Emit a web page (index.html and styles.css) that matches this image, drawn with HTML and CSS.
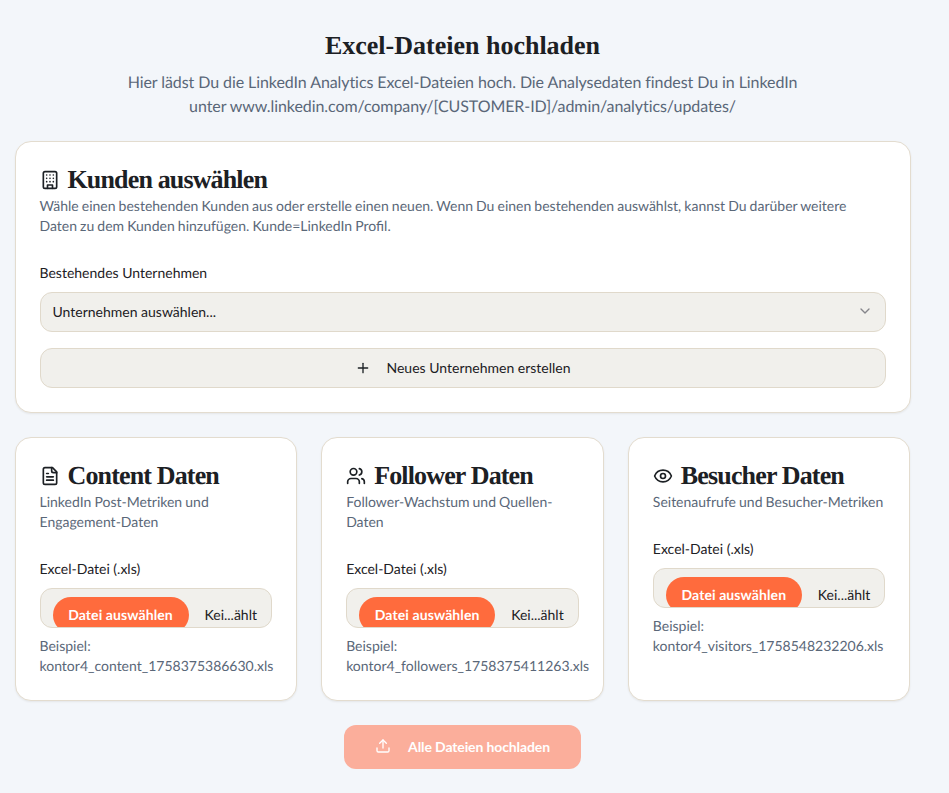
FILE: index.html
```html
<!DOCTYPE html>
<html lang="de">
<head>
    <meta charset="UTF-8">
    <meta name="viewport" content="width=device-width, initial-scale=1.0">
    <title>Excel-Dateien hochladen</title>
    <link rel="stylesheet" href="styles.css">
</head>
<body>
    <main class="page">
        <header class="intro">
            <h1>Excel-Dateien hochladen</h1>
            <p>Hier lädst Du die LinkedIn Analytics Excel-Dateien hoch. Die Analysedaten findest Du in LinkedIn unter www.linkedin.com/company/[CUSTOMER-ID]/admin/analytics/updates/</p>
        </header>

        <section class="card customer">
            <h2 class="card-title">
                <svg class="icon" viewBox="0 0 24 24"><rect x="4" y="2" width="16" height="20" rx="2"/><path d="M9 22v-4h6v4"/><path d="M8 6h.01M16 6h.01M12 6h.01M12 10h.01M12 14h.01M16 10h.01M16 14h.01M8 10h.01M8 14h.01"/></svg>
                Kunden auswählen
            </h2>
            <p class="card-text">Wähle einen bestehenden Kunden aus oder erstelle einen neuen. Wenn Du einen bestehenden auswählst, kannst Du darüber weitere Daten zu dem Kunden hinzufügen. Kunde=LinkedIn Profil.</p>
            <label class="field-label">Bestehendes Unternehmen</label>
            <button class="control select">
                <span>Unternehmen auswählen...</span>
                <svg class="chevron" viewBox="0 0 24 24"><path d="m6 9 6 6 6-6"/></svg>
            </button>
            <button class="control new-company">
                <svg class="plus" viewBox="0 0 24 24"><path d="M5 12h14"/><path d="M12 5v14"/></svg>
                Neues Unternehmen erstellen
            </button>
        </section>

        <div class="upload-grid">
            <section class="card upload">
                <h2 class="card-title">
                    <svg class="icon" viewBox="0 0 24 24"><path d="M15 2H6a2 2 0 0 0-2 2v16a2 2 0 0 0 2 2h12a2 2 0 0 0 2-2V7Z"/><path d="M14 2v4a2 2 0 0 0 2 2h4"/><path d="M10 9H8"/><path d="M16 13H8"/><path d="M16 17H8"/></svg>
                    Content Daten
                </h2>
                <p class="card-text">LinkedIn Post-Metriken und Engagement-Daten</p>
                <label class="field-label">Excel-Datei (.xls)</label>
                <div class="control file-input">
                    <span class="file-button">Datei auswählen</span>
                    <span class="file-name">Kei...ählt</span>
                </div>
                <p class="example">Beispiel: kontor4_content_1758375386630.xls</p>
            </section>

            <section class="card upload">
                <h2 class="card-title">
                    <svg class="icon" viewBox="0 0 24 24"><path d="M16 21v-2a4 4 0 0 0-4-4H6a4 4 0 0 0-4 4v2"/><circle cx="9" cy="7" r="4"/><path d="M22 21v-2a4 4 0 0 0-3-3.87"/><path d="M16 3.13a4 4 0 0 1 0 7.75"/></svg>
                    Follower Daten
                </h2>
                <p class="card-text">Follower-Wachstum und Quellen-Daten</p>
                <label class="field-label">Excel-Datei (.xls)</label>
                <div class="control file-input">
                    <span class="file-button">Datei auswählen</span>
                    <span class="file-name">Kei...ählt</span>
                </div>
                <p class="example">Beispiel: kontor4_followers_1758375411263.xls</p>
            </section>

            <section class="card upload">
                <h2 class="card-title">
                    <svg class="icon" viewBox="0 0 24 24"><path d="M2.062 12.348a1 1 0 0 1 0-.696 10.75 10.75 0 0 1 19.876 0 1 1 0 0 1 0 .696 10.75 10.75 0 0 1-19.876 0"/><circle cx="12" cy="12" r="3"/></svg>
                    Besucher Daten
                </h2>
                <p class="card-text">Seitenaufrufe und Besucher-Metriken</p>
                <label class="field-label">Excel-Datei (.xls)</label>
                <div class="control file-input">
                    <span class="file-button">Datei auswählen</span>
                    <span class="file-name">Kei...ählt</span>
                </div>
                <p class="example">Beispiel: kontor4_visitors_1758548232206.xls</p>
            </section>
        </div>

        <div class="actions">
            <button class="submit" disabled>
                <svg class="submit-icon" viewBox="0 0 24 24"><path d="M21 15v4a2 2 0 0 1-2 2H5a2 2 0 0 1-2-2v-4"/><path d="m17 8-5-5-5 5"/><path d="M12 3v12"/></svg>
                Alle Dateien hochladen
            </button>
        </div>
    </main>
</body>
</html>
```

FILE: styles.css
```css
* {
    box-sizing: border-box;
}

body {
    margin: 0;
    min-height: 100vh;
    background: #f3f6fa;
    color: #1c2024;
    font-family: 'Lato', sans-serif;
    font-size: 14px;
    line-height: 20px;
    text-rendering: geometricPrecision;
}

svg {
    fill: none;
    stroke: currentColor;
    stroke-width: 2;
    stroke-linecap: round;
    stroke-linejoin: round;
    flex-shrink: 0;
}

.page {
    width: 896px;
    margin-left: 14.5px;
    padding: 30px 0 24px;
}

.intro {
    text-align: center;
    margin-bottom: 22px;
}

.intro h1 {
    margin: 0 0 9px;
    font-family: 'Liberation Serif', serif;
    font-size: 26px;
    line-height: 32px;
    font-weight: 700;
}

.intro p {
    width: 680px;
    margin: 0 auto;
    color: #5a6778;
    font-size: 16px;
    line-height: 24px;
    letter-spacing: -0.08px;
}

.card {
    background: #fff;
    border: 1px solid #e3dccf;
    border-radius: 16px;
    padding: 24px;
    box-shadow: 0 1px 2px rgba(60, 50, 30, 0.08);
}

.card-title {
    display: flex;
    align-items: center;
    gap: 8px;
    margin: 0;
    font-family: 'Liberation Serif', serif;
    font-size: 26px;
    letter-spacing: -0.85px;
    line-height: 28px;
    font-weight: 700;
}

.icon {
    width: 20px;
    height: 20px;
}

.card-text {
    margin: 0 0 27px;
    padding-top: 2px;
    color: #5a6778;
    word-spacing: -0.5px;
}

.field-label {
    display: block;
    margin-bottom: 9px;
}

.control {
    display: flex;
    align-items: center;
    width: 100%;
    height: 40px;
    background: #f1f0ec;
    border: 1px solid #e0d9cb;
    border-radius: 12px;
    font-family: inherit;
    font-size: 14px;
    color: inherit;
}

.select {
    justify-content: space-between;
    padding: 0 12px 2px;
}

.chevron {
    width: 16px;
    height: 16px;
    color: #85858a;
}

.new-company {
    justify-content: center;
    gap: 16px;
    margin-top: 16px;
    padding-bottom: 2px;
}

.plus {
    width: 16px;
    height: 16px;
}

.upload-grid {
    display: grid;
    grid-template-columns: repeat(3, minmax(0, 1fr));
    gap: 24px;
    margin-top: 24px;
}

.file-input {
    align-items: flex-start;
    overflow: hidden;
    padding: 8px 0 0 12px;
}

.file-button {
    flex-shrink: 0;
    width: 136px;
    height: 36px;
    padding-top: 8px;
    border-radius: 18px;
    background: #ff6b3d;
    color: #fff;
    font-weight: 700;
    letter-spacing: 0.1px;
    text-align: center;
}

.file-name {
    margin: 8px 0 0 16px;
    white-space: nowrap;
}

.example {
    margin: 8px 0 0;
    color: #5a6778;
}

.actions {
    display: flex;
    justify-content: center;
    margin-top: 24px;
}

.submit {
    display: flex;
    align-items: center;
    justify-content: center;
    gap: 17px;
    width: 237px;
    height: 44px;
    padding: 0 0 2px;
    border: none;
    border-radius: 12px;
    background: #fbae9b;
    color: #fff;
    font-family: inherit;
    font-size: 14px;
    font-weight: 700;
    letter-spacing: -0.12px;
}

.submit-icon {
    width: 16px;
    height: 16px;
}
```
